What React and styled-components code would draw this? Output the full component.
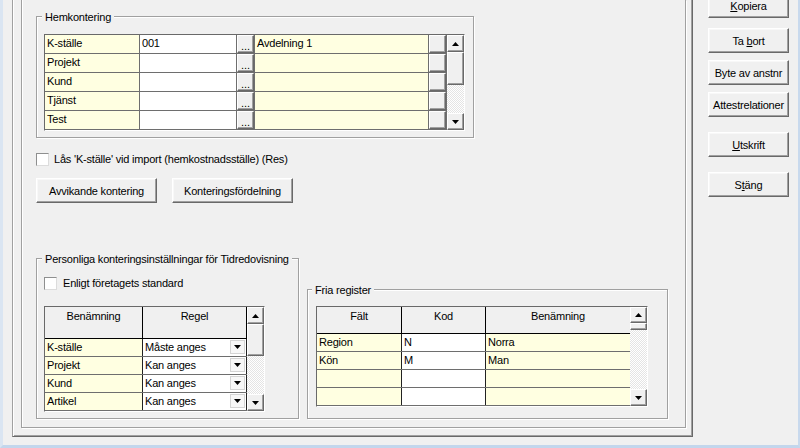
import styled, { createGlobalStyle, css } from "styled-components";

const YELLOW = "#ffffe1";

const GlobalStyle = createGlobalStyle`
  html, body { margin: 0; padding: 0; background: #f0f0f0; }
  body {
    font-family: "Liberation Sans", Arial, sans-serif;
    font-size: 11px;
    color: #000;
  }
  * { box-sizing: border-box; }
`;

const raised = css`
  background: #f0f0f0;
  border: 1px solid;
  border-color: #fff #696969 #696969 #fff;
  box-shadow: inset -1px -1px 0 #a0a0a0;
`;

const Window = styled.div`
  width: 800px;
  height: 448px;
  overflow: hidden;
  display: flex;
  background: #f0f0f0;
  border-left: 3px solid #dae5f2;
  border-right: 2px solid #c8d9ed;
  border-bottom: 3px solid #c3d6ec;
  padding-left: 9px;
  letter-spacing: -0.2px;
`;

const OuterFrame = styled.div`
  flex-shrink: 0;
  width: 681px;
  height: 437px;
  display: flex;
  padding: 0 6px 8px 8px;
  border-left: 1px solid #a0a0a0;
  border-right: 1px solid #696969;
  border-bottom: 1px solid #696969;
  box-shadow: inset 1px 0 0 #fff, inset -1px -1px 0 #a0a0a0;
`;

const InnerPanel = styled.div`
  flex: 1;
  display: flex;
  flex-direction: column;
  align-items: flex-start;
  padding: 16px 0 8px 14px;
  border: 1px solid #a0a0a0;
  border-top: none;
  box-shadow: 1px 1px 0 #fff, inset 1px 0 0 #fff;
`;

const GroupBox = styled.div`
  width: ${(p) => p.$w}px;
  padding: 0 0 ${(p) => p.$pb}px ${(p) => p.$pl}px;
  border: 1px solid #a0a0a0;
  box-shadow: 1px 1px 0 #fff, inset 1px 1px 0 #fff;
`;

const Legend = styled.div`
  width: fit-content;
  margin: -7px 0 0 ${(p) => p.$ml}px;
  padding: 0 3px;
  line-height: 14px;
  background: #f0f0f0;
  white-space: nowrap;
`;

const Frame = styled.div`
  display: flex;
  width: ${(p) => p.$w}px;
  margin-top: ${(p) => p.$mt || 0}px;
  border: 1px solid;
  border-color: #696969 #fff #fff #696969;
  background: #fff;
`;

const Table = styled.div`
  flex: 1;
  display: flex;
  flex-direction: column;
`;

const Row = styled.div`
  display: grid;
  grid-template-columns: ${(p) => p.$cols};
  height: ${(p) => p.$h}px;
  border-bottom: 1px solid ${(p) => p.$line || "#6e6e6e"};
`;

const Cell = styled.div`
  display: flex;
  justify-content: space-between;
  background: ${(p) => p.$bg || "#fff"};
  border-right: ${(p) => (p.$sep ? `1px solid ${p.$sep}` : "none")};
  padding-left: ${(p) => (p.$pad === false ? 0 : 2)}px;
  line-height: ${(p) => p.$lh || 17}px;
  white-space: nowrap;
  overflow: hidden;
`;

const HeadCell = styled.div`
  background: #f0f0f0;
  border-right: ${(p) => (p.$sep ? "1px solid #000" : "none")};
  text-align: center;
  padding-top: 2px;
  line-height: 14px;
`;

const CellButton = styled.div`
  ${raised};
  flex: 1;
  display: flex;
  align-items: flex-end;
  justify-content: center;
  line-height: 11px;
  letter-spacing: 0;
`;

const DropButton = styled.div`
  width: 15px;
  height: 14px;
  margin: 1px 1px 0 0;
  display: flex;
  align-items: center;
  justify-content: center;
  background: #f7f7f7;
  border: 1px solid #d4d4d4;
`;

const ScrollTrack = styled.div`
  width: 17px;
  flex-shrink: 0;
  display: flex;
  flex-direction: column;
  background: repeating-conic-gradient(#fff 0 25%, #e4e4e4 0 50%) 0 0 / 2px 2px;
`;

const ScrollButton = styled.div`
  ${raised};
  height: ${(p) => p.$h}px;
  display: flex;
  align-items: center;
  justify-content: center;
`;

const Thumb = styled.div`
  ${raised};
  height: ${(p) => p.$h}px;
`;

const Spacer = styled.div`
  flex: 1;
`;

const CheckRow = styled.div`
  display: flex;
  align-items: center;
  gap: ${(p) => p.$gap || 5}px;
  margin-top: ${(p) => p.$mt}px;
  line-height: 14px;
  white-space: nowrap;
`;

const CheckBox = styled.span`
  width: 13px;
  height: 13px;
  background: #fff;
  border: 1px solid;
  border-color: #8e8f8f #dcdcdc #dcdcdc #8e8f8f;
`;

const ButtonRow = styled.div`
  display: flex;
  gap: 15px;
  margin-top: ${(p) => p.$mt}px;
`;

const PushButton = styled.div`
  ${raised};
  width: ${(p) => p.$w}px;
  height: 25px;
  flex-shrink: 0;
  margin-top: ${(p) => p.$mt || 0}px;
  display: flex;
  align-items: center;
  justify-content: center;
  white-space: nowrap;
  box-shadow: inset -1px -1px 0 #a0a0a0, inset 1px 1px 0 #f8f8f8;
`;

const BottomRow = styled.div`
  margin-top: auto;
  display: flex;
  align-items: flex-end;
  gap: 8px;
`;

const ButtonColumn = styled.div`
  display: flex;
  flex-direction: column;
  margin-top: -7px;
  padding-left: 15px;
`;

const Arrow = ({ down }) => (
  <svg width="7" height="4" viewBox="0 0 7 4">
    <polygon points={down ? "0,0 7,0 3.5,4" : "0,4 7,4 3.5,0"} fill="#000" />
  </svg>
);

const ScrollBar = ({ up = 17, thumb, down = 17 }) => (
  <ScrollTrack>
    <ScrollButton $h={up}>
      <Arrow />
    </ScrollButton>
    <Thumb $h={thumb} />
    <Spacer />
    <ScrollButton $h={down}>
      <Arrow down />
    </ScrollButton>
  </ScrollTrack>
);

const hemRows = [
  ["K-ställe", "001", "Avdelning 1"],
  ["Projekt", "", ""],
  ["Kund", "", ""],
  ["Tjänst", "", ""],
  ["Test", "", ""],
];

const regelRows = [
  ["K-ställe", "Måste anges"],
  ["Projekt", "Kan anges"],
  ["Kund", "Kan anges"],
  ["Artikel", "Kan anges"],
];

const friaRows = [
  ["Region", "N", "Norra"],
  ["Kön", "M", "Man"],
  ["", "", ""],
  ["", "", ""],
];

const HEM_COLS = "95px 97px 18px 174px 18px";
const REGEL_COLS = "98px 104px";
const FRIA_COLS = "85px 84px 144px";

export default function App() {
  return (
    <>
      <GlobalStyle />
      <Window>
        <OuterFrame>
          <InnerPanel>
            <GroupBox $w={438} $pl={7} $pb={6}>
              <Legend $ml={-2}>Hemkontering</Legend>
              <Frame $w={421} $mt={10}>
                <Table>
                  {hemRows.map(([label, code, desc]) => (
                    <Row key={label} $cols={HEM_COLS} $h={19}>
                      <Cell $bg={YELLOW} $sep="#6e6e6e" $lh={16}>{label}</Cell>
                      <Cell $sep="#6e6e6e" $lh={16}>{code}</Cell>
                      <Cell $sep="#6e6e6e" $pad={false}>
                        <CellButton>...</CellButton>
                      </Cell>
                      <Cell $bg={YELLOW} $sep="#6e6e6e" $lh={16}>{desc}</Cell>
                      <Cell $sep="#6e6e6e" $pad={false}>
                        <CellButton />
                      </Cell>
                    </Row>
                  ))}
                </Table>
                <ScrollBar thumb={33} />
              </Frame>
            </GroupBox>

            <CheckRow $mt={14}>
              <CheckBox />
              <span>Lås 'K-ställe' vid import (hemkostnadsställe) (Res)</span>
            </CheckRow>

            <ButtonRow $mt={12}>
              <PushButton $w={121}>Avvikande kontering</PushButton>
              <PushButton $w={121}>Konteringsfördelning</PushButton>
            </ButtonRow>

            <BottomRow>
              <GroupBox $w={263} $pl={7} $pb={6}>
                <Legend $ml={-2}>Personliga konteringsinställningar för Tidredovisning</Legend>
                <CheckRow $mt={10} $gap={6}>
                  <CheckBox />
                  <span>Enligt företagets standard</span>
                </CheckRow>
                <Frame $w={221} $mt={16}>
                  <Table>
                    <Row $cols={REGEL_COLS} $h={32} $line="#000">
                      <HeadCell $sep>Benämning</HeadCell>
                      <HeadCell $sep>Regel</HeadCell>
                    </Row>
                    {regelRows.map(([label, rule]) => (
                      <Row key={label} $cols={REGEL_COLS} $h={18}>
                        <Cell $bg={YELLOW} $sep="#222">{label}</Cell>
                        <Cell $sep="#222">
                          {rule}
                          <DropButton>
                            <Arrow down />
                          </DropButton>
                        </Cell>
                      </Row>
                    ))}
                  </Table>
                  <ScrollBar thumb={32} />
                </Frame>
              </GroupBox>

              <GroupBox $w={361} $pl={8} $pb={11}>
                <Legend $ml={-4}>Fria register</Legend>
                <Frame $w={332} $mt={9}>
                  <Table>
                    <Row $cols={FRIA_COLS} $h={27} $line="#000">
                      <HeadCell $sep>Fält</HeadCell>
                      <HeadCell $sep>Kod</HeadCell>
                      <HeadCell>Benämning</HeadCell>
                    </Row>
                    {friaRows.map(([field, code, name], i) => (
                      <Row key={i} $cols={FRIA_COLS} $h={18}>
                        <Cell $bg={YELLOW} $sep="#222">{field}</Cell>
                        <Cell $sep="#222">{code}</Cell>
                        <Cell $bg={YELLOW}>{name}</Cell>
                      </Row>
                    ))}
                  </Table>
                  <ScrollBar up={16} thumb={7} />
                </Frame>
              </GroupBox>
            </BottomRow>
          </InnerPanel>
        </OuterFrame>

        <ButtonColumn>
          <PushButton $w={81}>
            <u>K</u>opiera
          </PushButton>
          <PushButton $w={81} $mt={10}>
            Ta&nbsp;<u>b</u>ort
          </PushButton>
          <PushButton $w={81} $mt={7}>Byte av anstnr</PushButton>
          <PushButton $w={81} $mt={7}>Attestrelationer</PushButton>
          <PushButton $w={81} $mt={15}>
            <u>U</u>tskrift
          </PushButton>
          <PushButton $w={81} $mt={15}>
            S<u>t</u>äng
          </PushButton>
        </ButtonColumn>
      </Window>
    </>
  );
}
